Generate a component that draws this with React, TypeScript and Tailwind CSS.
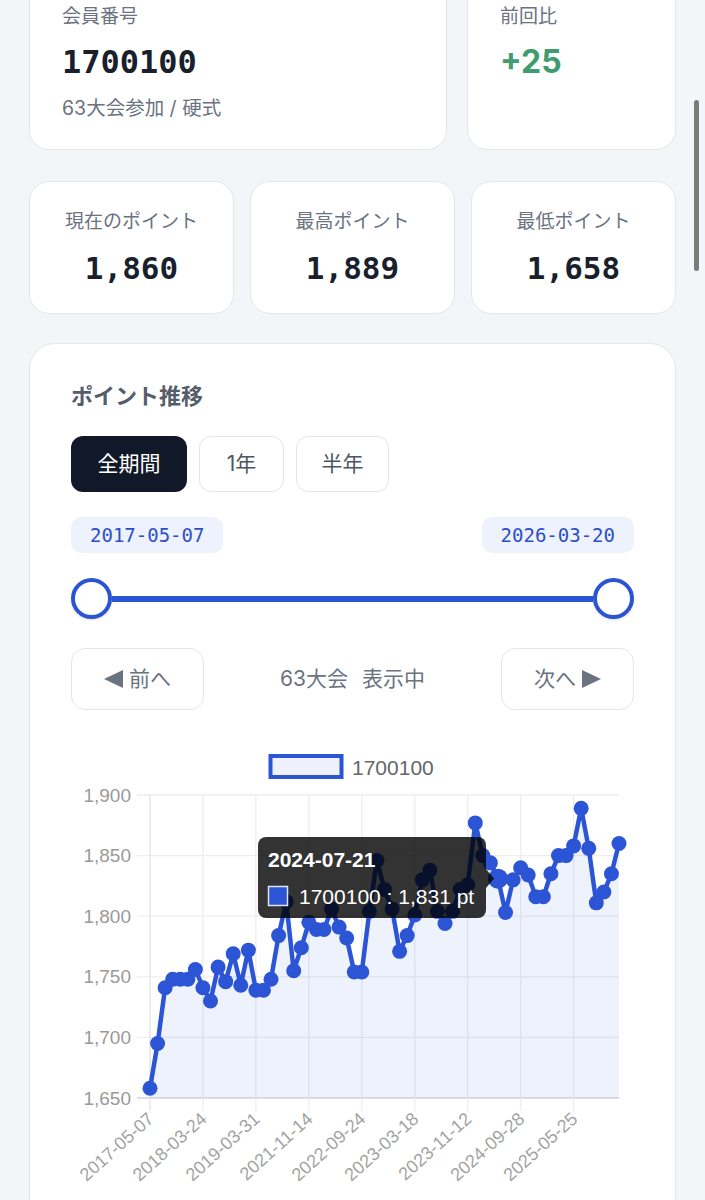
const POINTS = [
  1658, 1695, 1741, 1748, 1748, 1748, 1756, 1741, 1730, 1758, 1746, 1769, 1743, 1772, 1739, 1739,
  1748, 1784, 1812, 1755, 1774, 1795, 1789, 1789, 1806, 1791, 1782, 1754, 1754, 1804, 1846, 1822,
  1806, 1771, 1784, 1801, 1830, 1838, 1804, 1794, 1804, 1822, 1826, 1877, 1850, 1844, 1831, 1803,
  1830, 1840, 1834, 1816, 1816, 1835, 1850, 1850, 1858, 1889, 1856, 1811, 1820, 1835, 1860,
];

const X_TICKS: [number, string][] = [
  [0, "2017-05-07"],
  [7, "2018-03-24"],
  [14, "2019-03-31"],
  [21, "2021-11-14"],
  [28, "2022-09-24"],
  [35, "2023-03-18"],
  [42, "2023-11-12"],
  [49, "2024-09-28"],
  [56, "2025-05-25"],
];

const Y_TICKS = [1900, 1850, 1800, 1750, 1700, 1650];

// chart area, in page pixels (the svg viewBox uses the same numbers)
const LEFT = 150;
const RIGHT = 619;
const TOP = 795;
const BOTTOM = 1098;
const HOVER = 46;

const xAt = (i: number) => LEFT + (i * (RIGHT - LEFT)) / (POINTS.length - 1);
const yAt = (v: number) => BOTTOM - ((v - 1650) * (BOTTOM - TOP)) / 250;

const mono = "font-['DejaVu_Sans_Mono','Noto_Sans_CJK_JP',monospace]";

function PointChart() {
  const line = POINTS.map((v, i) => `${i ? "L" : "M"}${xAt(i).toFixed(1)} ${yAt(v).toFixed(1)}`).join(" ");
  const area = `${line} L${RIGHT} ${BOTTOM} L${LEFT} ${BOTTOM} Z`;

  return (
    <svg
      viewBox="71 740 563 470"
      width={563}
      height={470}
      className="block font-['Liberation_Sans',Arial,sans-serif]"
    >
      {/* legend */}
      <rect x={270.5} y={756} width={71} height={21} fill="#eef1fb" stroke="#2c55d6" strokeWidth={4} />
      <text x={352} y={767} dominantBaseline="central" fontSize={21} fill="#666">
        1700100
      </text>

      {/* grid */}
      {Y_TICKS.map((v) => (
        <line
          key={v}
          x1={137}
          x2={RIGHT}
          y1={yAt(v)}
          y2={yAt(v)}
          stroke={v === 1650 ? "#d6d6d6" : "#ededed"}
          strokeWidth={1.3}
        />
      ))}
      {X_TICKS.map(([i]) => (
        <line key={i} x1={xAt(i)} x2={xAt(i)} y1={TOP} y2={1111} stroke={i === 0 ? "#e2e2e2" : "#ededed"} strokeWidth={1.3} />
      ))}

      {/* axis labels */}
      {Y_TICKS.map((v) => (
        <text key={v} x={131} y={yAt(v)} textAnchor="end" dominantBaseline="central" fontSize={19} fill="#9a9a9a">
          {v.toLocaleString("en-US")}
        </text>
      ))}
      {X_TICKS.map(([i, label]) => {
        const x = xAt(i) + 1;
        const y = 1116;
        return (
          <text
            key={i}
            x={x}
            y={y}
            textAnchor="end"
            dominantBaseline="central"
            fontSize={18}
            fill="#a3a3a3"
            transform={`rotate(-42 ${x} ${y})`}
          >
            {label}
          </text>
        );
      })}

      {/* dataset */}
      <path d={area} fill="rgba(44,85,214,0.08)" />
      <path d={line} fill="none" stroke="#2c55d6" strokeWidth={4.5} strokeLinejoin="round" />
      {POINTS.map((v, i) => (
        <circle key={i} cx={xAt(i)} cy={yAt(v)} r={i === HOVER ? 10 : 7.5} fill="#2c55d6" />
      ))}

      {/* tooltip */}
      <rect x={258} y={837} width={228} height={81} rx={8} fill="rgba(0,0,0,0.8)" />
      <path d="M486 869 L494 878.5 L486 888 Z" fill="rgba(0,0,0,0.8)" />
      <text x={268} y={867} fontSize={21} fontWeight="bold" fill="#fff">
        2024-07-21
      </text>
      <rect x={268.5} y={886.5} width={19} height={19} fill="#2c55d6" stroke="#dfe6fb" strokeWidth={1.5} />
      <text x={299} y={904} fontSize={21} fill="#fff">
        1700100 : 1,831 pt
      </text>
    </svg>
  );
}

function StatCard({ label, value }: { label: string; value: string }) {
  return (
    <div className="bg-white border border-[#e4e6eb] rounded-[20px] pt-[26px] pb-[25px] flex flex-col items-center">
      <div className="text-[19px] leading-[28px] text-[#6b7280]">{label}</div>
      <div className={`mt-[12px] text-[31px] leading-[40px] font-bold text-[#1a1f2e] ${mono}`}>{value}</div>
    </div>
  );
}

export default function App() {
  return (
    <div className="relative h-[1200px] overflow-hidden bg-[#f4f5f8] font-['Inter','Noto_Sans_CJK_JP',sans-serif]">
      <div className="px-[29px] -mt-[30px]">
        {/* member header */}
        <div className="grid grid-cols-[2fr_1fr] gap-5">
          <div className="bg-white border border-[#e4e6eb] rounded-[20px] px-[32px] pt-[32px] pb-[27px]">
            <div className="text-[19px] leading-[28px] text-[#6b7280]">会員番号</div>
            <div className={`mt-[11px] text-[32px] leading-[40px] font-bold text-[#1a1f2e] ${mono}`}>1700100</div>
            <div className="mt-[12px] text-[19.5px] leading-[28px] text-[#6b7280]">63大会参加 / 硬式</div>
          </div>
          <div className="bg-white border border-[#e4e6eb] rounded-[20px] px-[32px] pt-[32px] pb-[27px]">
            <div className="text-[19px] leading-[28px] text-[#6b7280]">前回比</div>
            <div className="mt-[11px] text-[32px] leading-[40px] font-bold text-[#3f9c6e]">+25</div>
          </div>
        </div>

        {/* stats */}
        <div className="mt-[31px] grid grid-cols-3 gap-4">
          <StatCard label="現在のポイント" value="1,860" />
          <StatCard label="最高ポイント" value="1,889" />
          <StatCard label="最低ポイント" value="1,658" />
        </div>

        {/* history card */}
        <div className="mt-[29px] bg-white border border-[#e4e6eb] rounded-[26px] px-[41px] pt-[38px] pb-10">
          <h2 className="text-[22px] leading-[28px] font-bold text-[#555d6b]">ポイント推移</h2>

          <div className="mt-[26px] flex gap-3">
            <button className="h-[56px] w-[116px] rounded-[12px] bg-[#111827] text-white text-[21px]">全期間</button>
            <button className="h-[56px] w-[85px] rounded-[12px] bg-white border border-[#e4e6eb] text-[#4b5563] text-[21px]">1年</button>
            <button className="h-[56px] w-[93px] rounded-[12px] bg-white border border-[#e4e6eb] text-[#4b5563] text-[21px]">半年</button>
          </div>

          <div className="mt-[25px] flex justify-between">
            <span className={`h-[36px] px-[19px] flex items-center rounded-[10px] bg-[#eef2fc] text-[#2c4fc9] text-[19px] ${mono}`}>
              2017-05-07
            </span>
            <span className={`h-[36px] px-[19px] flex items-center rounded-[10px] bg-[#eef2fc] text-[#2c4fc9] text-[19px] ${mono}`}>
              2026-03-20
            </span>
          </div>

          {/* range slider */}
          <div className="mt-[25px] h-[41px] flex items-center">
            <div className="h-[41px] w-[41px] rounded-full border-4 border-[#2b54d4] bg-white shadow-sm" />
            <div className="flex-1 h-[6px] bg-[#2b54d4]" />
            <div className="h-[41px] w-[41px] rounded-full border-4 border-[#2b54d4] bg-white shadow-sm" />
          </div>

          {/* prev / next */}
          <div className="mt-[29px] flex items-center justify-between">
            <button className="h-[62px] w-[133px] rounded-[14px] border border-[#e4e6eb] bg-white flex items-center justify-center gap-[6px] text-[21px] text-[#6b7280]">
              <svg width="19" height="18" viewBox="0 0 19 18">
                <polygon points="0,9 19,0 19,18" fill="#6b7280" />
              </svg>
              前へ
            </button>
            <div className="flex gap-[14px] text-[21px] text-[#6b7280]">
              <span>63大会</span>
              <span>表示中</span>
            </div>
            <button className="h-[62px] w-[133px] rounded-[14px] border border-[#e4e6eb] bg-white flex items-center justify-center gap-[6px] text-[21px] text-[#6b7280]">
              次へ
              <svg width="19" height="18" viewBox="0 0 19 18">
                <polygon points="0,0 19,9 0,18" fill="#6b7280" />
              </svg>
            </button>
          </div>

          <div className="mt-[30px]">
            <PointChart />
          </div>
        </div>
      </div>

      {/* overlay scrollbar */}
      <div className="absolute right-[6px] top-[100px] h-[171px] w-[5px] rounded-full bg-[#7b7b7b]" />
    </div>
  );
}
